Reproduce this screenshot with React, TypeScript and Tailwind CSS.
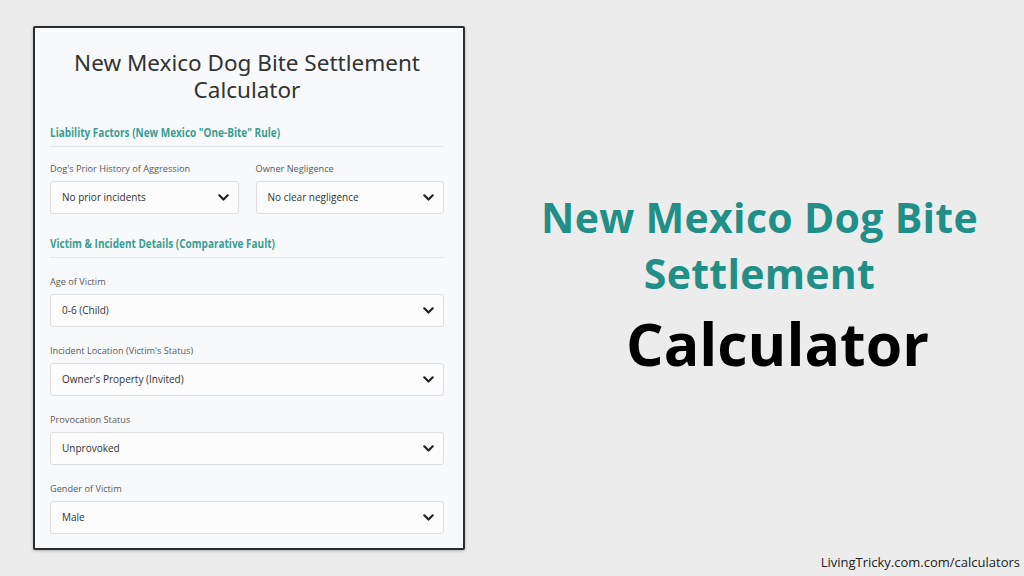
import React from "react";

function Chevron() {
  return (
    <svg width="11" height="7" viewBox="0 0 11 7" fill="none">
      <path d="M1.3 1.3 L5.5 5.5 L9.7 1.3" stroke="#222" strokeWidth="2.2" strokeLinecap="round" strokeLinejoin="round" />
    </svg>
  );
}

function Field({ label, value }: { label: string; value: string }) {
  return (
    <div className="flex flex-col">
      <div className="text-[9.2px] leading-[12px] text-[#5a5a5a] mb-[6px]">{label}</div>
      <div className="h-[33px] rounded-[3px] border border-[#dedede] bg-[#fcfcfc] flex items-center justify-between pl-[11px] pr-[9px]">
        <span className="text-[10px] text-[#333]">{value}</span>
        <Chevron />
      </div>
    </div>
  );
}

function Section({ title }: { title: string }) {
  return (
    <div className="flex border-b border-[#e4e6e8] pb-[6px]">
      <div className="origin-left scale-x-[0.8] whitespace-nowrap text-[12.5px] leading-[14px] font-bold text-[#3a9d93]">
        {title}
      </div>
    </div>
  );
}

export default function App() {
  return (
    <div
      className="w-[1024px] h-[576px] bg-[#ececec] relative overflow-hidden flex"
      style={{ fontFamily: '"Open Sans", "Noto Sans", sans-serif' }}
    >
      <div className="ml-[33px] mt-[26px] w-[432px] h-[524px] border-2 border-[#2d2d2d] rounded-[2px] bg-[#f8f9fa] pl-[15px] pr-[19px] shadow-[0_1px_3px_rgba(0,0,0,0.25)]">
        <div
          className="mt-[21px] flex flex-col items-center text-[22.5px] leading-[27px] text-[#333]"
          style={{ fontFamily: '"Noto Sans", "Open Sans", sans-serif' }}
        >
          <span>New Mexico Dog Bite Settlement</span>
          <span>Calculator</span>
        </div>
        <div className="mt-[23px]">
          <Section title={'Liability Factors (New Mexico "One-Bite" Rule)'} />
        </div>
        <div className="mt-[16px] grid grid-cols-2 gap-x-[17px]">
          <Field label="Dog's Prior History of Aggression" value="No prior incidents" />
          <Field label="Owner Negligence" value="No clear negligence" />
        </div>
        <div className="mt-[23px]">
          <Section title="Victim & Incident Details (Comparative Fault)" />
        </div>
        <div className="mt-[18px] flex flex-col gap-[18px]">
          <Field label="Age of Victim" value="0-6 (Child)" />
          <Field label="Incident Location (Victim's Status)" value="Owner's Property (Invited)" />
          <Field label="Provocation Status" value="Unprovoked" />
          <Field label="Gender of Victim" value="Male" />
        </div>
      </div>

      <div className="flex-1 flex flex-col items-center pt-[189px] pl-[30px]">
        <div className="flex flex-col items-center text-[41px] leading-[56px] font-bold text-[#1f8f87] tracking-[0.3px]">
          <span>New Mexico Dog Bite</span>
          <span>Settlement</span>
        </div>
        <div className="text-[59px] leading-[62px] font-bold text-black ml-[36px] mt-[11px]">
          Calculator
        </div>
      </div>

      <div className="absolute right-[4px] bottom-[4px] text-[13px] text-[#222]">
        LivingTricky.com.com/calculators
      </div>
    </div>
  );
}
